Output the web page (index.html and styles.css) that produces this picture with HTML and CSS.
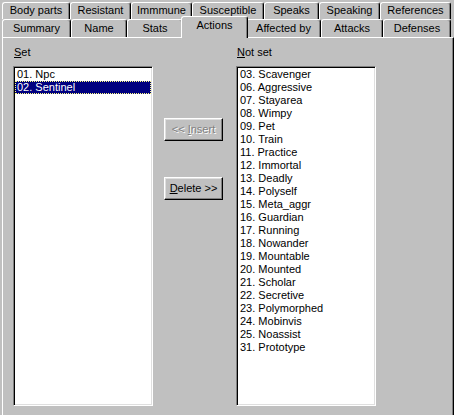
FILE: index.html
```html
<!DOCTYPE html>
<html>
<head>
<meta charset="utf-8">
<link rel="stylesheet" href="styles.css">
</head>
<body>
<div class="sheet">
  <div class="tabrow back">
    <div class="tab w68">Body parts</div>
    <div class="tab w61">Resistant</div>
    <div class="tab w61">Immmune</div>
    <div class="tab w72">Susceptible</div>
    <div class="tab w55">Speaks</div>
    <div class="tab w61">Speaking</div>
    <div class="tab w71">References</div>
  </div>
  <div class="tabrow front">
    <div class="tab w69">Summary</div>
    <div class="tab w56">Name</div>
    <div class="tab w56">Stats</div>
    <div class="tab w63 active">Actions</div>
    <div class="tab w75">Affected by</div>
    <div class="tab w62">Attacks</div>
    <div class="tab w68">Defenses</div>
  </div>
  <div class="page">
    <div class="col">
      <div class="label"><u>S</u>et</div>
      <ul class="listbox">
        <li>01. Npc</li>
        <li class="selected">02. Sentinel</li>
      </ul>
    </div>
    <div class="actions">
      <button class="btn disabled" type="button">&lt;&lt; <u>I</u>nsert</button>
      <button class="btn" type="button"><u>D</u>elete &gt;&gt;</button>
    </div>
    <div class="col right">
      <div class="label"><u>N</u>ot set</div>
      <ul class="listbox">
        <li>03. Scavenger</li>
        <li>06. Aggressive</li>
        <li>07. Stayarea</li>
        <li>08. Wimpy</li>
        <li>09. Pet</li>
        <li>10. Train</li>
        <li>11. Practice</li>
        <li>12. Immortal</li>
        <li>13. Deadly</li>
        <li>14. Polyself</li>
        <li>15. Meta_aggr</li>
        <li>16. Guardian</li>
        <li>17. Running</li>
        <li>18. Nowander</li>
        <li>19. Mountable</li>
        <li>20. Mounted</li>
        <li>21. Scholar</li>
        <li>22. Secretive</li>
        <li>23. Polymorphed</li>
        <li>24. Mobinvis</li>
        <li>25. Noassist</li>
        <li>31. Prototype</li>
      </ul>
    </div>
  </div>
</div>
</body>
</html>
```
FILE: styles.css
```css
* {
  box-sizing: border-box;
}

html, body {
  margin: 0;
  width: 454px;
  height: 415px;
  overflow: hidden;
  background: #c0c0c0;
}

body {
  font: 11px/13px "Liberation Sans", Arial, sans-serif;
  color: #000;
}

.sheet {
  padding: 2px 0 0 2px;
}

/* Tab rows */
.tabrow {
  display: flex;
}

.back {
  height: 17px;
}

.front {
  height: 18px;
}

.tab {
  flex: none;
  height: 100%;
  text-align: center;
  white-space: nowrap;
  padding-top: 2px;
  border-top: 1px solid #fff;
  border-left: 1px solid #fff;
  border-right: 1px solid #000;
  border-radius: 3px 3px 0 0;
  box-shadow: inset -1px 0 0 #808080;
  background: #c0c0c0;
}

.back .tab {
  padding-top: 1px;
}

.tab.active {
  position: relative;
  z-index: 2;
  height: 22px;
  margin: -3px -2px 0 -2px;
  padding-top: 2px;
}

.w55 { width: 55px; }
.w56 { width: 56px; }
.w61 { width: 61px; }
.w62 { width: 62px; }
.w63 { width: 63px; }
.w68 { width: 68px; }
.w69 { width: 69px; }
.w71 { width: 71px; }
.w72 { width: 72px; }
.w75 { width: 75px; }

.w63.active { width: 67px; }

/* Property page (its bottom edge lies below the window) */
.page {
  display: flex;
  align-items: flex-start;
  width: 452px;
  height: 378px;
  padding: 8px 0 0 10px;
  border-top: 1px solid #fff;
  border-left: 1px solid #fff;
  border-right: 1px solid #000;
  box-shadow: inset -1px 0 0 #808080;
}

.col {
  width: 140px;
}

.right {
  margin-left: 13px;
}

.label {
  padding-left: 1px;
  margin-bottom: 7px;
  height: 13px;
}

.listbox {
  list-style: none;
  margin: 0;
  height: 340px;
  background: #fff;
  border: 1px solid;
  border-color: #808080 #fff #fff #808080;
  box-shadow: inset 1px 1px 0 #000, inset -1px -1px 0 #dfdfdf;
  padding: 1px;
}

.listbox li {
  height: 13px;
  line-height: 13px;
  padding-left: 2px;
  white-space: nowrap;
}

.listbox li.selected {
  background: #000080;
  color: #fff;
  outline: 1px dotted #ffff80;
  outline-offset: -1px;
}

/* Move buttons */
.actions {
  display: flex;
  flex-direction: column;
  gap: 36px;
  margin: 72px 0 0 11px;
}

.btn {
  width: 59px;
  height: 23px;
  padding: 0;
  font: 11px/13px "Liberation Sans", Arial, sans-serif;
  color: #000;
  background: #c0c0c0;
  border: 1px solid;
  border-color: #fff #000 #000 #fff;
  box-shadow: inset -1px -1px 0 #808080, inset 1px 1px 0 #dfdfdf;
}

.btn.disabled {
  color: #808080;
  text-shadow: 1px 1px 0 #fff;
}
```
